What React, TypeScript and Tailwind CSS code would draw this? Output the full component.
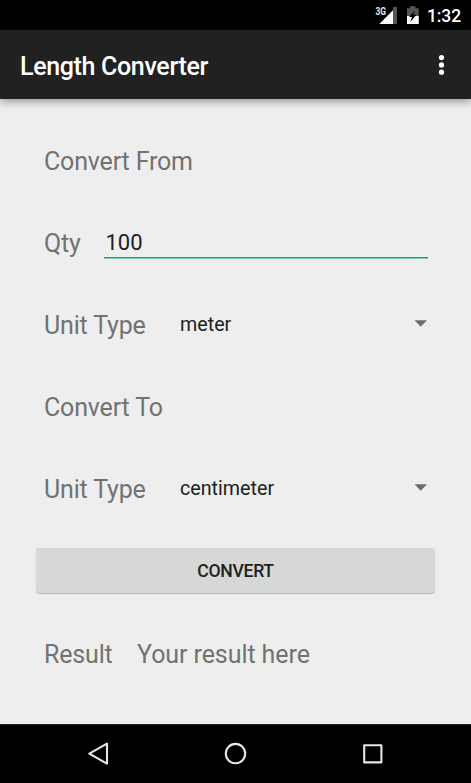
import type { ReactNode } from 'react';

function Row({ children }: { children: ReactNode }) {
  return <div className="flex h-[82px] items-center pl-11 pr-[43px]">{children}</div>;
}

function Label({ children, className = 'tracking-[-0.17px]' }: { children: ReactNode; className?: string }) {
  return <span className={`whitespace-nowrap pt-[2px] text-[25px] leading-[30px] text-[#727272] ${className}`}>{children}</span>;
}

function UnitSelect({ value }: { value: string }) {
  return (
    <div className="flex flex-1 items-center justify-between text-[19.7px] leading-6 text-[#212121]">
      <span className="-mt-px">{value}</span>
      <svg className="-mt-1 h-[7px] w-[14px]" viewBox="0 0 14 7">
        <path d="M0.500 0.2h12.500L6.700 6.800z" fill="#6c6c6c" />
      </svg>
    </div>
  );
}

export default function App() {
  return (
    <div className="flex h-[783px] w-[471px] flex-col overflow-hidden bg-[#eeeeee] font-['Roboto','Noto_Sans',sans-serif]">
      <div className="flex h-[30px] shrink-0 items-center justify-end bg-black pr-[10px] text-white">
        <svg className="h-[30px] w-[48px]" viewBox="0 0 48 30">
          <text x="0.500" y="15" fontSize="11" fontWeight="700" fill="#e8e8e8" textLength="10.500" lengthAdjust="spacingAndGlyphs">3G</text>
          <path d="M18 7H22V24H18z" fill="#555" />
          <path d="M18 10.300V24H4.300z" fill="#fff" />
          <path d="M35 6.300h5.500v2h3.200v15.700H32V8.300h3z" fill="#555" />
          <path d="M32 16h11.700v8H32z" fill="#fff" />
          <path d="M40 10.500L34 17H37L35.200 22L41.500 14.700H38.300z" fill="#000" />
        </svg>
        <span className="ml-1 w-[34px] whitespace-nowrap pt-px text-[17.5px] font-medium leading-5 tracking-[-0.1px]">1:32</span>
      </div>
      <header className="z-10 flex h-[69px] shrink-0 items-center justify-between bg-[#212121] pl-5 pr-[26px] shadow-[0_3px_8px_rgba(0,0,0,0.36)]">
        <h1 className="pt-1 text-[25px] font-medium leading-[30px] tracking-[-0.34px] text-white">Length Converter</h1>
        <svg className="h-5 w-[7px]" viewBox="0 0 7 20" fill="#fff">
          <circle cx="3.500" cy="2.600" r="2.600" />
          <circle cx="3.500" cy="9.900" r="2.600" />
          <circle cx="3.500" cy="17.200" r="2.600" />
        </svg>
      </header>
      <main className="flex flex-1 flex-col pt-[21px]">
        <Row><Label>Convert From</Label></Row>
        <Row>
          <Label className="w-[60px] tracking-[-0.17px]">Qty</Label>
          <div className="mt-px flex h-[31px] flex-1 flex-col justify-between">
            <span className="pl-[1.5px] text-[22px] leading-[29px] text-[#212121]">100</span>
            <div className="h-[2px] shrink-0 border-t border-[#408881] bg-[#79d0c1]" />
          </div>
        </Row>
        <Row><Label className="w-[136px] tracking-[-0.17px]">Unit Type</Label><UnitSelect value="meter" /></Row>
        <Row><Label>Convert To</Label></Row>
        <Row><Label className="w-[136px] tracking-[-0.17px]">Unit Type</Label><UnitSelect value="centimeter" /></Row>
        <button className="ml-9 mt-[18px] h-[45px] w-[399px] shrink-0 rounded-[3px] bg-[#d6d8d7] pt-px text-[17.6px] font-medium tracking-[-0.3px] text-[#212121] shadow-[0_1px_1px_rgba(0,0,0,0.22)]">CONVERT</button>
        <div className="flex h-[122px] items-center pl-11">
          <Label className="w-[93px] tracking-[-0.17px]">Result</Label>
          <Label className="tracking-[-0.08px]">Your result here</Label>
        </div>
      </main>
      <nav className="h-[59px] shrink-0 border-t border-[#222] bg-black">
        <svg className="h-[58px] w-[471px]" viewBox="0 0 471 58" fill="none" stroke="#e6e6e6" strokeWidth="2.100" strokeLinejoin="round">
          <path d="M107 18.700V38.700L89.300 28.700z" />
          <circle cx="235.500" cy="28.600" r="9.700" />
          <path d="M364.200 20.200h17.200v17.200h-17.200z" />
        </svg>
      </nav>
    </div>
  );
}
